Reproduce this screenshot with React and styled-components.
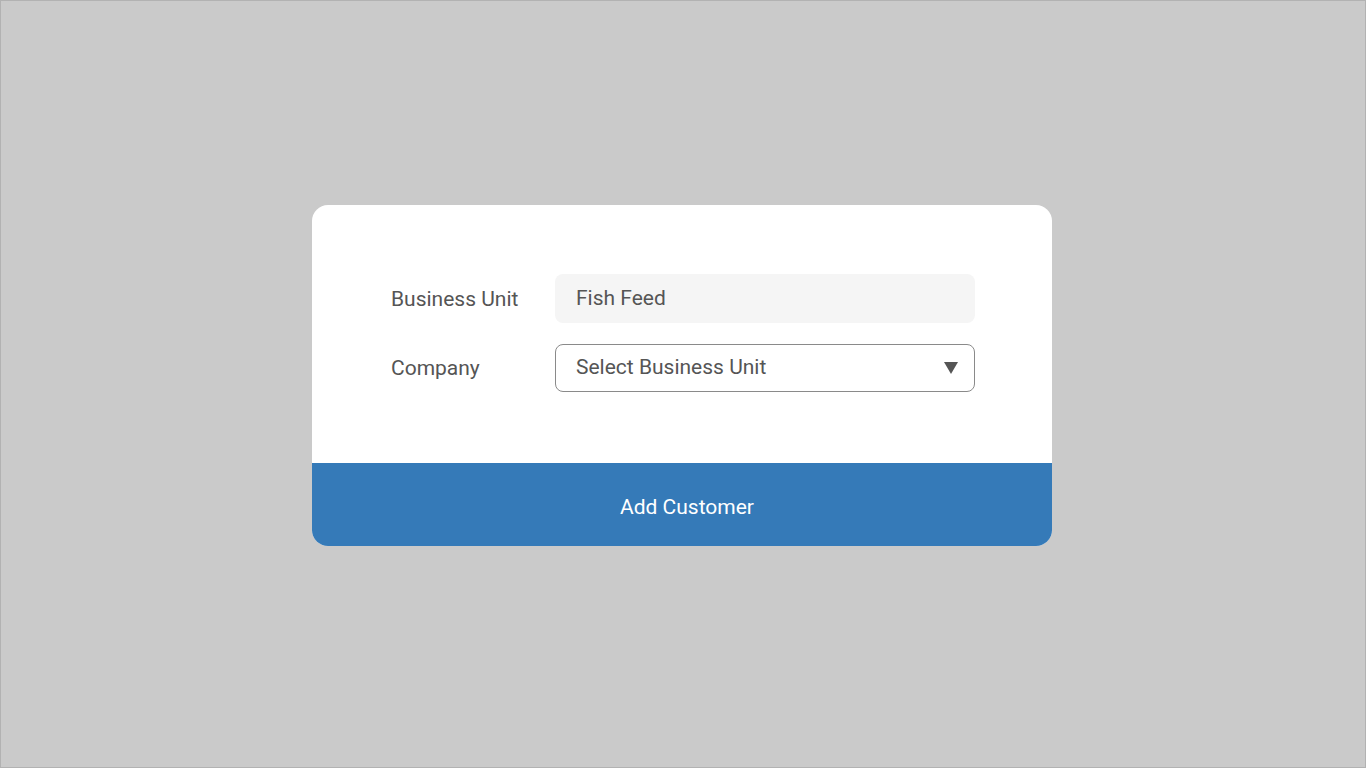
import React from "react";
import styled, { createGlobalStyle } from "styled-components";

const Global = createGlobalStyle`
  html, body { margin: 0; padding: 0; }
  body { font-family: Roboto, "Noto Sans", sans-serif; }
  * { box-sizing: border-box; }
`;

const Page = styled.div`
  width: 1366px;
  height: 768px;
  background: #cacaca;
  border: 1px solid #b2b2b2;
  display: flex;
  justify-content: center;
  align-items: flex-start;
  padding-top: 204px;
  padding-right: 2px;
`;

const Card = styled.div`
  width: 740px;
  background: #ffffff;
  border-radius: 16px;
  overflow: hidden;
  display: flex;
  flex-direction: column;
`;

const Body = styled.div`
  padding: 69px 77px 71px 79px;
  display: flex;
  flex-direction: column;
  gap: 21px;
`;

const Row = styled.div`
  display: grid;
  grid-template-columns: 164px 1fr;
  align-items: center;
`;

const Label = styled.div`
  font-size: 21px;
  color: #555555;
  padding-top: ${(p) => (p.$shift ? 0 : 1)}px;
`;

const Field = styled.div`
  height: ${(p) => (p.$select ? 48 : 49)}px;
  border-radius: 8px;
  background: ${(p) => (p.$select ? "#ffffff" : "#f5f5f5")};
  border: ${(p) => (p.$select ? "1px solid #8a8a8a" : "none")};
  padding: 0 16px ${(p) => (p.$select ? 2 : 1)}px ${(p) => (p.$select ? 20 : 21)}px;
  display: flex;
  align-items: center;
  justify-content: space-between;
  font-size: 21px;
  color: #555555;
`;

const Arrow = styled.svg`
  width: 14px;
  height: 12px;
  display: block;
  margin-top: 1px;
`;

const Footer = styled.button`
  height: 83px;
  border: none;
  background: #357ab8;
  color: #ffffff;
  font-family: Roboto, "Noto Sans", sans-serif;
  font-size: 21px;
  display: flex;
  align-items: center;
  justify-content: center;
  padding: 4px 0 0 10px;
  cursor: pointer;
`;

export default function App() {
  return (
    <>
      <Global />
      <Page>
        <Card>
          <Body>
            <Row>
              <Label>Business Unit</Label>
              <Field>Fish Feed</Field>
            </Row>
            <Row>
              <Label $shift>Company</Label>
              <Field $select>
                <span>Select Business Unit</span>
                <Arrow viewBox="0 0 14 12">
                  <polygon points="0,0 14,0 7,12" fill="#555555" />
                </Arrow>
              </Field>
            </Row>
          </Body>
          <Footer>Add Customer</Footer>
        </Card>
      </Page>
    </>
  );
}
